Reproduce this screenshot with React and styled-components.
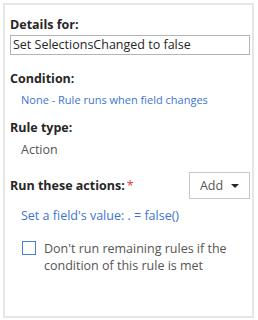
import React from 'react'
import styled, { createGlobalStyle } from 'styled-components'

const Global = createGlobalStyle`
  html, body {
    margin: 0;
    padding: 0;
    background: #ffffff;
  }
  body {
    font-family: 'Open Sans', 'Noto Sans', sans-serif;
    font-size: 12px;
    color: #262626;
  }
`

const Panel = styled.div`
  box-sizing: border-box;
  margin: 3px 0 0 3px;
  width: 251px;
  height: 315px;
  border: 2px solid #e6e6e6;
  padding: 12px 3px 0 5px;
`

const Label = styled.div`
  font-weight: 700;
  font-size: 12.5px;
  line-height: 16px;
  color: #262626;
  margin-top: ${(p) => p.top || 0}px;
`

const Input = styled.div`
  box-sizing: border-box;
  height: 20px;
  border: 1px solid #b4b4b4;
  padding: 0 2px;
  font-size: 12.5px;
  line-height: 18px;
  color: #262626;
  margin-top: 2px;
  width: 240px;
`

const Value = styled.div`
  padding-left: 11px;
  font-size: ${(p) => (p.small ? 11 : 12.5)}px;
  line-height: 16px;
  color: ${(p) => (p.link ? '#3c74d4' : '#555555')};
  margin-top: ${(p) => p.top || 0}px;
`

const ActionRow = styled.div`
  display: flex;
  align-items: center;
  justify-content: space-between;
  margin-top: 14px;
  width: 240px;
`

const Star = styled.span`
  color: #e03c31;
  font-weight: 400;
  margin-left: 2px;
`

const AddButton = styled.div`
  box-sizing: border-box;
  width: 61px;
  height: 27px;
  border: 1px solid #c8c8c8;
  display: flex;
  align-items: center;
  justify-content: center;
  gap: 8px;
  font-size: 12.5px;
  color: #555555;
`

const Caret = styled.span`
  width: 0;
  height: 0;
  border-left: 4px solid transparent;
  border-right: 4px solid transparent;
  border-top: 4px solid #262626;
`

const CheckRow = styled.div`
  display: flex;
  align-items: flex-start;
  gap: 8px;
  padding-left: 12px;
  margin-top: 16px;
`

const Box = styled.span`
  flex: none;
  box-sizing: border-box;
  width: 14px;
  height: 14px;
  border: 1px solid #4a7fd8;
  margin-top: 1px;
`

const CheckText = styled.div`
  font-size: 12.5px;
  line-height: 17px;
  color: #555555;
  width: 190px;
`

export default function App() {
  return (
    <>
      <Global />
      <Panel>
        <Label>Details for:</Label>
        <Input>Set SelectionsChanged to false</Input>
        <Label top={16}>Condition:</Label>
        <Value link small top={5}>None - Rule runs when field changes</Value>
        <Label top={12}>Rule type:</Label>
        <Value top={6}>Action</Value>
        <ActionRow>
          <Label>
            Run these actions:<Star>*</Star>
          </Label>
          <AddButton>
            Add <Caret />
          </AddButton>
        </ActionRow>
        <Value link top={9}>Set a field's value: . = false()</Value>
        <CheckRow>
          <Box />
          <CheckText>Don't run remaining rules if the condition of this rule is met</CheckText>
        </CheckRow>
      </Panel>
    </>
  )
}
